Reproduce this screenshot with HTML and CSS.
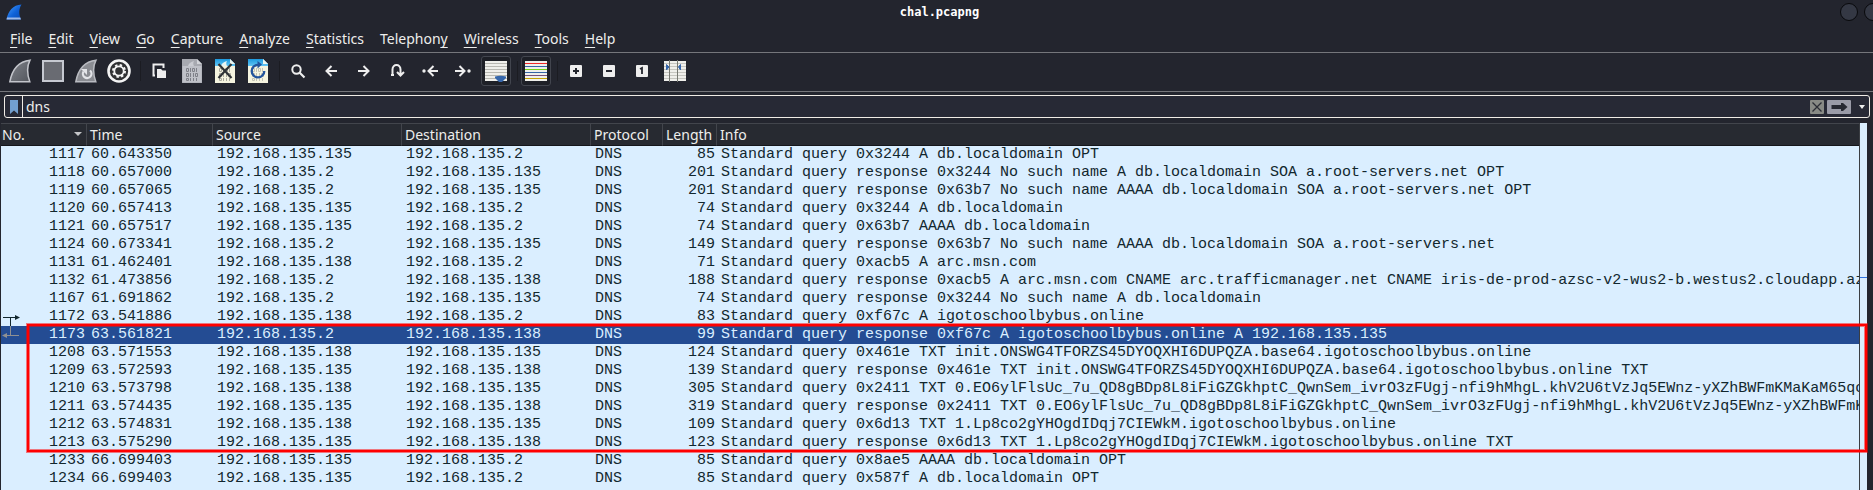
FILE: index.html
```
<!DOCTYPE html>
<html lang="en">
<head>
<meta charset="utf-8">
<title>chal.pcapng</title>
<link rel="stylesheet" href="styles.css">
</head>
<body>
<svg width="0" height="0" class="defs" aria-hidden="true">
  <defs>
    <linearGradient id="blue" x1="0" y1="0" x2="1" y2="1"><stop offset="0" stop-color="#4aa0ff"/><stop offset=".55" stop-color="#0f62d8"/><stop offset="1" stop-color="#0a49b0"/></linearGradient>
    <linearGradient id="sky" x1="0" y1="0" x2="0" y2="1"><stop offset="0" stop-color="#1c9ae0"/><stop offset="1" stop-color="#62c4f2"/></linearGradient>
    <linearGradient id="slate" x1="0" y1="0" x2="1" y2="1"><stop offset="0" stop-color="#80838a"/><stop offset="1" stop-color="#53565d"/></linearGradient>
    <g id="bits" fill="none" stroke-width="1">
      <path d="M4.5 9.5h2v3h-2zM8.5 9v4M10.500 9.500h2v3h-2zM14.500 9v4"/>
      <path d="M4.500 14.500h2v3h-2zM8.500 14v4M11.500 14v4M13.500 14.500h2v3h-2z"/>
      <path d="M4.500 19.500h2v2h-2zM8.500 19v3M11.500 19v3M14.500 19v3"/>
    </g>
  </defs>
</svg>
<div class="window">
  <header class="titlebar">
    <svg class="app-icon" width="16" height="16" viewBox="0 0 16 16"><path d="M.5 15.500C2 7 7 1 15.500.5 12.500 5.500 12.800 10 15 15.500z" fill="url(#blue)"/><path d="M.5 15.500L1 13.500h13.300l.7 2z" fill="#9db9e8"/></svg>
    <h1 class="title">chal.pcapng</h1>
    <div class="window-buttons"><button class="round" aria-label="Minimize"></button><button class="round" aria-label="Maximize"></button></div>
  </header>
  <nav class="menubar">
    <button><u>F</u>ile</button><button><u>E</u>dit</button><button><u>V</u>iew</button><button><u>G</u>o</button><button><u>C</u>apture</button><button><u>A</u>nalyze</button><button><u>S</u>tatistics</button><button>Telephon<u>y</u></button><button><u>W</u>ireless</button><button><u>T</u>ools</button><button><u>H</u>elp</button>
  </nav>
  <div class="toolbar" role="toolbar">
    <button aria-label="Start capture"><svg width="24" height="24" viewBox="0 0 24 24"><path d="M1.800 22.800C4 11 10 2.500 22 1.200 18.500 8 19 15 21.800 22.800z" fill="url(#slate)" stroke="#c3c5cb" stroke-width="1.500"/></svg></button>
    <button aria-label="Stop capture"><svg width="24" height="24" viewBox="0 0 24 24"><path d="M2 2h20v20H2z" fill="#696b72" stroke="#c6c9d1" stroke-width="2"/></svg></button>
    <button aria-label="Restart capture"><svg width="24" height="24" viewBox="0 0 24 24"><path d="M1.800 22.800C4 11 10 2.500 22 1.200 18.500 8 19 15 21.800 22.800z" fill="#8a8c92" stroke="#b9bbc1" stroke-width="1.500"/><path d="M16 11.500a4.300 4.300 0 1 1-6.500 1" fill="none" stroke="#e3e4e8" stroke-width="2.200"/><path d="M7 10h6v6z" fill="#e3e4e8"/></svg></button>
    <button aria-label="Capture options"><svg width="24" height="24" viewBox="0 0 24 24"><circle cx="12" cy="12" r="10.500" fill="#303133" stroke="#f4f4f4" stroke-width="2.600"/><circle cx="12" cy="12" r="5.800" fill="none" stroke="#f5f5f5" stroke-width="2.400" stroke-dasharray="2.300 2.255"/><circle cx="12" cy="12" r="4.700" fill="none" stroke="#f5f5f5" stroke-width="1.800"/></svg></button>
    <span class="sep"></span>
    <button aria-label="Open"><svg width="16" height="16" viewBox="0 0 16 16"><path d="M4 12.500H2.500v-11h10V5" fill="none" stroke="#eee" stroke-width="2"/><path d="M6 6h4l1.500 1.500H15V15H6z" fill="#eee"/></svg></button>
    <button aria-label="Save"><svg width="20" height="24" viewBox="0 0 20 24"><path d="M0 0h15l5 5v19H0z" fill="#a7a9b0"/><path d="M.5 7h19v16.500H.5z" fill="#bfc1c8"/><path d="M15 0v5h5z" fill="#d2d4d9"/><path d="M6 7c1-3 3-4 6-5-1 2-1 3 0 5z" fill="#c9cbd1"/><use href="#bits" stroke="#7e8088"/></svg></button>
    <button aria-label="Close"><svg width="20" height="24" viewBox="0 0 20 24"><path d="M0 0h15l5 5v19H0z" fill="#f5f4df"/><path d="M0 0h15l5 5v2H0z" fill="url(#sky)"/><path d="M15 0v5h5z" fill="#eef6ee"/><path d="M6 7c1-3 3-4 6-5-1 2-1 3 0 5z" fill="#e8f4f0"/><use href="#bits" stroke="#aaa99d"/><path d="M3.500 5l13 14M16.500 5l-13 14" stroke="#2e3235" stroke-width="2.200" fill="none"/></svg></button>
    <button aria-label="Reload"><svg width="20" height="24" viewBox="0 0 20 24"><path d="M0 0h15l5 5v19H0z" fill="#f5f4df"/><path d="M0 0h15l5 5v2H0z" fill="url(#sky)"/><path d="M15 0v5h5z" fill="#eef6ee"/><use href="#bits" stroke="#c3c2b4"/><path d="M10 5.800a6.300 6.300 0 1 0 6.300 6.300" fill="none" stroke="#22549d" stroke-width="2.300"/><path d="M9.500 2v7.500L14 5.500z" fill="#22549d"/></svg></button>
    <span class="sep"></span>
    <button aria-label="Find"><svg width="16" height="16" viewBox="0 0 16 16"><circle cx="6.500" cy="6.500" r="4.200" fill="none" stroke="#eee" stroke-width="2"/><path d="M9.500 9.500l5 5" stroke="#eee" stroke-width="2.200"/></svg></button>
    <button aria-label="Back"><svg width="16" height="16" viewBox="0 0 16 16"><path d="M14 8H4M8.500 3l-5 5 5 5" fill="none" stroke="#eee" stroke-width="2"/></svg></button>
    <button aria-label="Forward"><svg width="16" height="16" viewBox="0 0 16 16"><path d="M2 8h10M7.500 3l5 5-5 5" fill="none" stroke="#eee" stroke-width="2"/></svg></button>
    <button aria-label="Go to packet"><svg width="16" height="16" viewBox="0 0 16 16"><path d="M3.500 12V6.500C3.500.5 11.500.5 11.500 6.500V12M8 9l3.500 3.500L15 9M2 12h3" fill="none" stroke="#eee" stroke-width="2"/></svg></button>
    <button aria-label="First packet"><svg width="18" height="16" viewBox="0 0 18 16"><path d="M17 8H8M12.500 3l-5 5 5 5" fill="none" stroke="#eee" stroke-width="2"/><circle cx="3" cy="8" r="1.700" fill="#eee"/></svg></button>
    <button aria-label="Last packet"><svg width="18" height="16" viewBox="0 0 18 16"><path d="M1 8h9M5.500 3l5 5-5 5" fill="none" stroke="#eee" stroke-width="2"/><circle cx="15" cy="8" r="1.700" fill="#eee"/></svg></button>
    <button class="on" aria-label="Auto scroll" aria-pressed="true"><svg width="22" height="22" viewBox="0 0 22 22"><path d="M0 1h22v20H0z" fill="#efefeb"/><path d="M0 3.500h22M0 6.500h22M0 9.500h22M0 12.500h22M0 15.500h22M0 18.500h22" stroke="#b8b8b2"/><path d="M10 16.500q5.500-1.500 11 0v1.500L17 22h-3l-4-4z" fill="#3566ab"/></svg></button>
    <span class="sep"></span>
    <button class="on" aria-label="Colorize" aria-pressed="true"><svg width="22" height="22" viewBox="0 0 22 22"><path d="M0 1h22v20H0z" fill="#efefeb"/><path d="M0 3.500h22" stroke="#ef2929"/><path d="M0 6.500h22M0 12.500h22" stroke="#3465a4"/><path d="M0 9.500h22" stroke="#73d216"/><path d="M0 15.500h22" stroke="#75507b"/><path d="M0 18.500h22" stroke="#c4a000"/></svg></button>
    <span class="sep"></span>
    <button aria-label="Zoom in"><svg width="12" height="12" viewBox="0 0 12 12"><rect width="12" height="12" rx="1" fill="#eee"/><path d="M3 6h6M6 3v6" stroke="#23252d" stroke-width="2"/></svg></button>
    <button aria-label="Zoom out"><svg width="12" height="12" viewBox="0 0 12 12"><rect width="12" height="12" rx="1" fill="#eee"/><path d="M3 6h6" stroke="#23252d" stroke-width="2"/></svg></button>
    <button aria-label="Normal size"><svg width="12" height="12" viewBox="0 0 12 12"><rect width="12" height="12" rx="1" fill="#eee"/><path d="M4 4l2-1v6" fill="none" stroke="#23252d" stroke-width="1.800"/></svg></button>
    <button aria-label="Resize columns"><svg width="22" height="22" viewBox="0 0 22 22"><path d="M0 1h22v20H0z" fill="#efefeb"/><path d="M0 3.500h22M0 6.500h22M0 9.500h22M0 12.500h22M0 15.500h22M0 18.500h22" stroke="#c6c6c0"/><path d="M5.500 0v22M13.500 0v22" stroke="#777972"/><path d="M2.500 4.500L5 7l-2.500 3zM16.500 4.500L14.500 7l2 3z" fill="#3566ab" stroke="#3566ab"/></svg></button>
  </div>
  <div class="filter-row">
    <div class="filter">
      <button class="bookmark" aria-label="Bookmarks"><svg width="8" height="14" viewBox="0 0 8 14"><path d="M0 0h8v14L4 10.500 0 14z" fill="#729fcf"/></svg></button>
      <input type="text" value="dns" aria-label="Display filter" spellcheck="false">
      <button class="clear" aria-label="Clear"><svg width="14" height="14" viewBox="0 0 14 14"><rect width="14" height="14" rx="1" fill="#888a85"/><path d="M2.500 2.500l9 9M11.500 2.500l-9 9" stroke="#2b2d35" stroke-width="1.300"/></svg></button>
      <button class="apply" aria-label="Apply"><svg width="24" height="14" viewBox="0 0 24 14"><rect width="24" height="14" rx="1" fill="#9a9ba7"/><path d="M4.500 5H14V3h2l4.500 4L16 11h-2V9H4.500z" fill="#272932"/></svg></button>
      <button class="drop" aria-label="Recent filters"><svg width="6" height="4" viewBox="0 0 6 4"><path d="M0 0h6L3 4z" fill="#eee"/></svg></button>
    </div>
  </div>
  <main class="packets">
    <div class="list">
    <table>
      <colgroup><col class="c-no"><col class="c-time"><col class="c-addr"><col class="c-addr"><col class="c-proto"><col class="c-len"><col></colgroup>
      <thead><tr><th><span class="sorted">No.<svg width="8" height="4" viewBox="0 0 8 4"><path d="M0 0h8L4 4z" fill="#c4c5c8"/></svg></span></th><th>Time</th><th>Source</th><th>Destination</th><th>Protocol</th><th>Length</th><th>Info</th></tr></thead>
      <tbody>
        <tr><td>1117</td><td>60.643350</td><td>192.168.135.135</td><td>192.168.135.2</td><td>DNS</td><td>85</td><td>Standard query 0x3244 A db.localdomain OPT</td></tr>
        <tr><td>1118</td><td>60.657000</td><td>192.168.135.2</td><td>192.168.135.135</td><td>DNS</td><td>201</td><td>Standard query response 0x3244 No such name A db.localdomain SOA a.root-servers.net OPT</td></tr>
        <tr><td>1119</td><td>60.657065</td><td>192.168.135.2</td><td>192.168.135.135</td><td>DNS</td><td>201</td><td>Standard query response 0x63b7 No such name AAAA db.localdomain SOA a.root-servers.net OPT</td></tr>
        <tr><td>1120</td><td>60.657413</td><td>192.168.135.135</td><td>192.168.135.2</td><td>DNS</td><td>74</td><td>Standard query 0x3244 A db.localdomain</td></tr>
        <tr><td>1121</td><td>60.657517</td><td>192.168.135.135</td><td>192.168.135.2</td><td>DNS</td><td>74</td><td>Standard query 0x63b7 AAAA db.localdomain</td></tr>
        <tr><td>1124</td><td>60.673341</td><td>192.168.135.2</td><td>192.168.135.135</td><td>DNS</td><td>149</td><td>Standard query response 0x63b7 No such name AAAA db.localdomain SOA a.root-servers.net</td></tr>
        <tr><td>1131</td><td>61.462401</td><td>192.168.135.138</td><td>192.168.135.2</td><td>DNS</td><td>71</td><td>Standard query 0xacb5 A arc.msn.com</td></tr>
        <tr><td>1132</td><td>61.473856</td><td>192.168.135.2</td><td>192.168.135.138</td><td>DNS</td><td>188</td><td>Standard query response 0xacb5 A arc.msn.com CNAME arc.trafficmanager.net CNAME iris-de-prod-azsc-v2-wus2-b.westus2.cloudapp.az</td></tr>
        <tr><td>1167</td><td>61.691862</td><td>192.168.135.2</td><td>192.168.135.135</td><td>DNS</td><td>74</td><td>Standard query response 0x3244 No such name A db.localdomain</td></tr>
        <tr><td>1172</td><td>63.541886</td><td>192.168.135.138</td><td>192.168.135.2</td><td>DNS</td><td>83</td><td>Standard query 0xf67c A igotoschoolbybus.online</td></tr>
        <tr class="selected"><td>1173</td><td>63.561821</td><td>192.168.135.2</td><td>192.168.135.138</td><td>DNS</td><td>99</td><td>Standard query response 0xf67c A igotoschoolbybus.online A 192.168.135.135</td></tr>
        <tr><td>1208</td><td>63.571553</td><td>192.168.135.138</td><td>192.168.135.135</td><td>DNS</td><td>124</td><td>Standard query 0x461e TXT init.ONSWG4TFORZS45DYOQXHI6DUPQZA.base64.igotoschoolbybus.online</td></tr>
        <tr><td>1209</td><td>63.572593</td><td>192.168.135.135</td><td>192.168.135.138</td><td>DNS</td><td>139</td><td>Standard query response 0x461e TXT init.ONSWG4TFORZS45DYOQXHI6DUPQZA.base64.igotoschoolbybus.online TXT</td></tr>
        <tr><td>1210</td><td>63.573798</td><td>192.168.135.138</td><td>192.168.135.135</td><td>DNS</td><td>305</td><td>Standard query 0x2411 TXT 0.EO6ylFlsUc_7u_QD8gBDp8L8iFiGZGkhptC_QwnSem_ivrO3zFUgj-nfi9hMhgL.khV2U6tVzJq5EWnz-yXZhBWFmKMaKaM65qo</td></tr>
        <tr><td>1211</td><td>63.574435</td><td>192.168.135.135</td><td>192.168.135.138</td><td>DNS</td><td>319</td><td>Standard query response 0x2411 TXT 0.EO6ylFlsUc_7u_QD8gBDp8L8iFiGZGkhptC_QwnSem_ivrO3zFUgj-nfi9hMhgL.khV2U6tVzJq5EWnz-yXZhBWFmK</td></tr>
        <tr><td>1212</td><td>63.574831</td><td>192.168.135.138</td><td>192.168.135.135</td><td>DNS</td><td>109</td><td>Standard query 0x6d13 TXT 1.Lp8co2gYHOgdIDqj7CIEWkM.igotoschoolbybus.online</td></tr>
        <tr><td>1213</td><td>63.575290</td><td>192.168.135.135</td><td>192.168.135.138</td><td>DNS</td><td>123</td><td>Standard query response 0x6d13 TXT 1.Lp8co2gYHOgdIDqj7CIEWkM.igotoschoolbybus.online TXT</td></tr>
        <tr><td>1233</td><td>66.699403</td><td>192.168.135.135</td><td>192.168.135.2</td><td>DNS</td><td>85</td><td>Standard query 0x8ae5 AAAA db.localdomain OPT</td></tr>
        <tr><td>1234</td><td>66.699403</td><td>192.168.135.135</td><td>192.168.135.2</td><td>DNS</td><td>85</td><td>Standard query 0x587f A db.localdomain OPT</td></tr>
      </tbody>
    </table>
    </div>
    <div class="minimap"><span class="mark"></span></div>
    <svg class="related" width="20" height="26" viewBox="0 0 20 26"><path d="M2 4.500h14M9.500 5v9" stroke="#12272e" fill="none"/><path d="M14 2l5 2.500-5 2.500z" fill="#12272e"/><path d="M9.500 13v10M4 22.500h14" stroke="#8f9092" fill="none"/><path d="M6 20l-5 2.500L6 25z" fill="#8f9092"/></svg>
    <div class="highlight"></div>
  </main>
</div>
</body>
</html>
```
FILE: styles.css
```
* { box-sizing: border-box; }
body {
  margin: 0;
  background: #23252e;
  color: #eeeeec;
  font-family: "Noto Sans", "Open Sans", sans-serif;
  font-size: 14px;
  overflow: hidden;
}
button {
  margin: 0;
  padding: 0;
  border: 0;
  background: none;
  color: inherit;
  font: inherit;
}
svg { display: block; flex: none; }
.defs { position: absolute; }
.window {
  display: flex;
  flex-direction: column;
  height: 100vh;
  overflow: hidden;
}

.titlebar {
  display: grid;
  grid-template-columns: 1fr auto 1fr;
  align-items: center;
  flex: none;
  height: 26px;
  padding: 0 0 2px 6px;
}
.title {
  margin: 0;
  font: bold 12px/16px "DejaVu Sans Mono", monospace;
  color: #fff;
}
.window-buttons {
  display: flex;
  justify-content: flex-end;
  gap: 6px;
  margin-right: -9px;
}
.round {
  width: 18px;
  height: 18px;
  border: 1px solid #08090c;
  border-radius: 50%;
  background: #343844;
}

.menubar {
  display: flex;
  flex: none;
  height: 27px;
  padding-left: 2px;
  border-bottom: 1px solid #75767b;
}
.menubar button {
  padding: 0 8px;
  line-height: 26px;
}
.menubar u { text-underline-offset: 3px; text-decoration-thickness: 1px; }

.toolbar {
  display: flex;
  align-items: center;
  flex: none;
  gap: 3px;
  height: 39px;
  padding: 0 0 2px 5px;
  border-bottom: 1px solid #75767b;
}
.toolbar button {
  display: flex;
  align-items: center;
  justify-content: center;
  width: 30px;
  height: 30px;
  flex: none;
}
.toolbar .on {
  border: 1px solid #42454e;
  border-radius: 3px;
  background: #1e2027;
}
.sep {
  width: 4px;
  height: 20px;
  border-right: 1px solid #1b1c22;
}

.filter-row {
  flex: none;
  padding: 3px 3px 5px 4px;
}
.filter {
  display: flex;
  align-items: center;
  height: 23px;
  border: 1px solid #f0ece6;
  border-radius: 3px;
  background: #272935;
}
.bookmark {
  display: flex;
  align-items: center;
  justify-content: center;
  width: 18px;
  height: 100%;
  border-right: 1px solid #f0ece6;
}
.filter input {
  flex: 1;
  min-width: 0;
  height: 21px;
  padding: 0 3px 1px;
  border: 0;
  outline: 0;
  background: none;
  color: #eeeeec;
  font: inherit;
}
.apply { margin-left: 3px; }
.drop { padding: 0 4px 0 8px; }

.packets {
  position: relative;
  display: flex;
  flex: 1;
  min-height: 0;
  margin-right: 6px;
  padding-left: 1px;
}
.list {
  flex: 1;
  min-width: 0;
  overflow: hidden;
  border-right: 1px solid #3a3d42;
  background: #daeeff;
}
table {
  width: 100%;
  table-layout: fixed;
  border-collapse: separate;
  border-spacing: 0;
}
.c-no { width: 86px; }
.c-time { width: 126px; }
.c-addr { width: 189px; }
.c-proto { width: 72px; }
.c-len { width: 54px; }
th {
  height: 23px;
  padding: 0 0 0 3px;
  border-top: 1px solid #42454c;
  border-right: 1px solid #42454c;
  border-bottom: 1px solid #15161b;
  background: #272a31;
  font-weight: 400;
  line-height: 21px;
  text-align: left;
  white-space: nowrap;
}
th:first-child { padding-left: 1px; }
th:last-child { border-right: 0; }
.sorted {
  display: flex;
  justify-content: space-between;
  padding-right: 4px;
}
.sorted svg { margin-top: 8px; }
td {
  height: 18px;
  padding: 0 2px 0 4px;
  overflow: hidden;
  color: #12272e;
  font: 15px/18px "Liberation Mono", monospace;
  white-space: nowrap;
}
td:nth-child(1), td:nth-child(6) { text-align: right; }
td:last-child { padding-right: 0; }
.selected td {
  background: #244c93;
  color: #daeeff;
}
.minimap {
  position: relative;
  width: 7px;
  background: #daeeff;
}
.mark {
  position: absolute;
  top: 154px;
  left: 0;
  right: 0;
  height: 1px;
  background: #2f74e0;
}
.related {
  position: absolute;
  top: 190px;
  left: 1px;
}
.highlight {
  position: absolute;
  top: 201px;
  left: 27px;
  right: 0;
  height: 128px;
  border: 2px solid #ff0000;
  box-shadow: 0 0 0 1px #ff000080, inset 0 0 0 1px #ff000080;
}
```
